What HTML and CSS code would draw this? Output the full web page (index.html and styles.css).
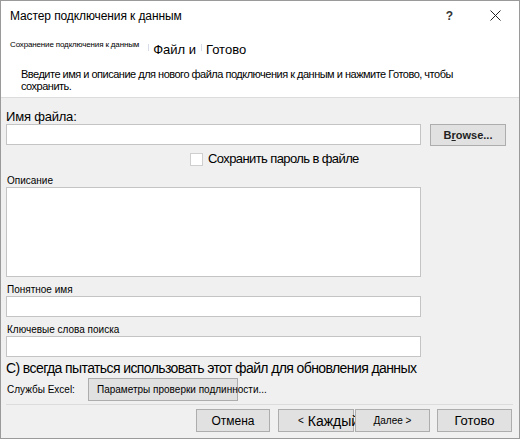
FILE: index.html
```html
<!DOCTYPE html>
<html lang="ru">
<head>
    <meta charset="UTF-8">
    <meta name="viewport" content="width=device-width, initial-scale=1.0">
    <title>Мастер подключения к данным</title>
    <link rel="stylesheet" href="styles.css">
</head>
<body>
    <div class="dialog">
        <div class="header">
            <div class="titlebar">
                <span class="title">Мастер подключения к данным</span>
                <span class="help">?</span>
                <svg class="close" width="11" height="11" viewBox="0 0 11 11">
                    <path d="M0.5 0.5 L10.5 10.5 M10.5 0.5 L0.5 10.5" stroke="#222" stroke-width="1" fill="none"/>
                </svg>
            </div>
            <div class="steps">
                <span class="step-small">Сохранение подключения к данным</span>
                <span class="step-sep first"></span>
                <span class="step">Файл и</span>
                <span class="step-sep"></span>
                <span class="step">Готово</span>
            </div>
            <p class="intro">Введите имя и описание для нового файла подключения к данным и нажмите Готово, чтобы<br>сохранить.</p>
        </div>

        <div class="content">
            <div class="label-big">Имя файла:</div>
            <div class="file-row">
                <input class="field" type="text">
                <button class="btn browse">B<u>r</u>owse...</button>
            </div>
            <label class="check">
                <span class="box"></span>
                Сохранить пароль в файле
            </label>

            <div class="label-small first">Описание</div>
            <textarea class="field area"></textarea>

            <div class="label-small">Понятное имя</div>
            <input class="field" type="text">

            <div class="label-small">Ключевые слова поиска</div>
            <input class="field" type="text">

            <div class="always">С) всегда пытаться использовать этот файл для обновления данных</div>

            <div class="services">
                <span class="services-label">Службы Excel:</span>
                <button class="btn auth">Параметры проверки подлинности...</button>
            </div>
        </div>

        <div class="footer">
            <button class="btn cancel">Отмена</button>
            <button class="btn back"><span class="arrow">&lt;</span> Каждый</button>
            <button class="btn next">Далее &gt;</button>
            <button class="btn finish">Готово</button>
        </div>
    </div>
</body>
</html>
```

FILE: styles.css
```css
body {
    margin: 0;
    font-family: 'Liberation Sans', Arial, sans-serif;
    color: #000;
}
.dialog {
    width: 520px;
    height: 439px;
    box-sizing: border-box;
    border: 1px solid #9a9a9a;
    background: #f0f0f0;
    display: flex;
    flex-direction: column;
}
.header {
    background: white;
    border-bottom: 1px solid #dcdcdc;
    padding-bottom: 5px;
}
.titlebar {
    height: 30px;
    display: flex;
    align-items: center;
    padding-left: 9px;
}
.title {
    font-size: 12px;
    letter-spacing: -0.1px;
}
.help {
    margin-left: auto;
    font-size: 12px;
    font-weight: bold;
    color: #333;
}
.close {
    margin: 0 18px 2px 37px;
}
.steps {
    display: flex;
    align-items: flex-start;
    padding: 9px 0 0 9px;
    height: 18px;
}
.step-small {
    font-size: 8px;
    line-height: 10px;
    letter-spacing: -0.15px;
}
.step {
    font-size: 13px;
    line-height: 16px;
    margin-top: 2px;
}
.step-sep {
    width: 1px;
    height: 7px;
    background: #d6dde6;
    margin: 4px 4px 0 5px;
}
.step-sep.first {
    margin-left: 9px;
}
.intro {
    margin: 10px 0 0 20px;
    font-size: 11px;
    line-height: 12px;
    letter-spacing: -0.5px;
}
.content {
    flex: 1;
    padding: 0 5px;
}
.label-big {
    font-size: 13px;
    line-height: 14px;
    margin-top: 12px;
    letter-spacing: -0.2px;
}
.field {
    display: block;
    box-sizing: border-box;
    width: 415px;
    height: 21px;
    margin: 0;
    padding: 0;
    border: 1px solid #c4c4c4;
    background: white;
    font: inherit;
}
.area {
    height: 90px;
    resize: none;
}
.file-row {
    display: flex;
    align-items: flex-start;
}
.btn {
    box-sizing: border-box;
    height: 23px;
    padding: 0;
    border: 1px solid #adadad;
    background: #e1e1e1;
    font-family: inherit;
    color: #000;
}
.browse {
    width: 76px;
    height: 22px;
    margin-left: 9px;
    font-size: 11px;
    font-weight: bold;
    color: #222;
}
.check {
    display: flex;
    align-items: center;
    margin: 6px 0 0 184px;
    font-size: 13px;
    line-height: 14px;
    gap: 5px;
    letter-spacing: -0.6px;
}
.box {
    width: 13px;
    height: 13px;
    box-sizing: border-box;
    border: 1px solid #cfcfcf;
    background: white;
}
.label-small {
    font-size: 10px;
    line-height: 12px;
    margin: 7px 0 0 1px;
}
.label-small.first {
    margin-top: 9px;
}
.always {
    font-size: 14px;
    line-height: 16px;
    margin-top: 3px;
    letter-spacing: -0.6px;
}
.services {
    display: flex;
    align-items: center;
    margin-top: 2px;
    padding-bottom: 3px;
    border-bottom: 1px solid #dcdcdc;
    width: 507px;
}
.services-label {
    font-size: 10px;
    margin-left: 1px;
    width: 81px;
}
.auth {
    width: 150px;
    font-size: 10px;
    text-align: left;
    padding-left: 8px;
    white-space: nowrap;
    overflow: visible;
}
.footer {
    display: flex;
    justify-content: flex-end;
    padding: 4px 7px 6px 0;
}
.footer .btn {
    width: 75px;
}
.cancel {
    width: 74px !important;
    font-size: 12px;
    margin-right: 8px;
}
.back {
    width: 76px !important;
    font-size: 14px;
    text-align: left;
    padding-left: 19px;
    white-space: nowrap;
    overflow: visible;
    margin-right: 1px;
}
.arrow {
    font-size: 10px;
    vertical-align: 2px;
}
.next {
    font-size: 10px;
    margin-right: 7px;
}
.finish {
    font-size: 13px;
}
```
